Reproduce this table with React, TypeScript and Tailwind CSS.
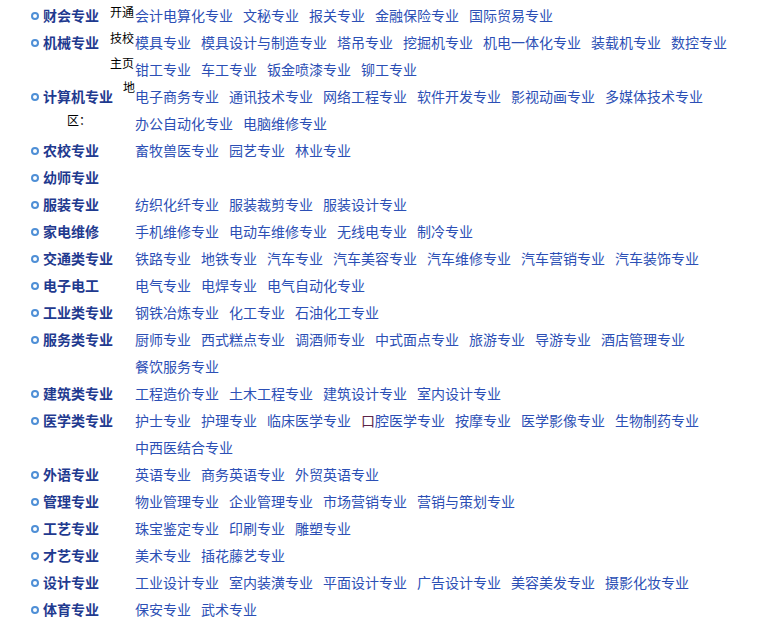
import React from 'react';

interface Category {
  name: string;
  majors: string[];
}

const categories: Category[] = [
  { name: '财会专业', majors: ['会计电算化专业', '文秘专业', '报关专业', '金融保险专业', '国际贸易专业'] },
  { name: '机械专业', majors: ['模具专业', '模具设计与制造专业', '塔吊专业', '挖掘机专业', '机电一体化专业', '装载机专业', '数控专业', '钳工专业', '车工专业', '钣金喷漆专业', '铆工专业'] },
  { name: '计算机专业', majors: ['电子商务专业', '通讯技术专业', '网络工程专业', '软件开发专业', '影视动画专业', '多媒体技术专业', '办公自动化专业', '电脑维修专业'] },
  { name: '农校专业', majors: ['畜牧兽医专业', '园艺专业', '林业专业'] },
  { name: '幼师专业', majors: [] },
  { name: '服装专业', majors: ['纺织化纤专业', '服装裁剪专业', '服装设计专业'] },
  { name: '家电维修', majors: ['手机维修专业', '电动车维修专业', '无线电专业', '制冷专业'] },
  { name: '交通类专业', majors: ['铁路专业', '地铁专业', '汽车专业', '汽车美容专业', '汽车维修专业', '汽车营销专业', '汽车装饰专业'] },
  { name: '电子电工', majors: ['电气专业', '电焊专业', '电气自动化专业'] },
  { name: '工业类专业', majors: ['钢铁冶炼专业', '化工专业', '石油化工专业'] },
  { name: '服务类专业', majors: ['厨师专业', '西式糕点专业', '调酒师专业', '中式面点专业', '旅游专业', '导游专业', '酒店管理专业', '餐饮服务专业'] },
  { name: '建筑类专业', majors: ['工程造价专业', '土木工程专业', '建筑设计专业', '室内设计专业'] },
  { name: '医学类专业', majors: ['护士专业', '护理专业', '临床医学专业', '口腔医学专业', '按摩专业', '医学影像专业', '生物制药专业', '中西医结合专业'] },
  { name: '外语专业', majors: ['英语专业', '商务英语专业', '外贸英语专业'] },
  { name: '管理专业', majors: ['物业管理专业', '企业管理专业', '市场营销专业', '营销与策划专业'] },
  { name: '工艺专业', majors: ['珠宝鉴定专业', '印刷专业', '雕塑专业'] },
  { name: '才艺专业', majors: ['美术专业', '插花藤艺专业'] },
  { name: '设计专业', majors: ['工业设计专业', '室内装潢专业', '平面设计专业', '广告设计专业', '美容美发专业', '摄影化妆专业'] },
  { name: '体育专业', majors: ['保安专业', '武术专业'] },
];

const MajorLink: React.FC<{ text: string }> = ({ text }) => {
  // the 口 in 口腔医学 shows as a visited-looking colour in the original
  if (text === '口腔医学专业') {
    return (
      <a href="#" className="text-[#2c4fb5] no-underline">
        <span className="text-[#5c2448]">口</span>腔医学专业
      </a>
    );
  }
  return (
    <a href="#" className="text-[#2c4fb5] no-underline">
      {text}
    </a>
  );
};

const App: React.FC = () => {
  return (
    <div
      className="relative w-[772px] h-[630px] bg-white pt-[2px] overflow-hidden"
      style={{ fontFamily: '"Noto Sans CJK SC", "Microsoft YaHei", sans-serif' }}
    >
      {categories.map((cat) => (
        <div key={cat.name} className="flex text-[14px] leading-[27px]">
          {/* Category label */}
          <div className="w-[135px] shrink-0 flex items-start pl-[31px] gap-[4px]">
            <span className="mt-[9.5px] w-[8px] h-[8px] rounded-full border-2 border-[#4f8fd6] shrink-0" />
            <span className="font-bold text-[#1f3a8f] whitespace-nowrap">{cat.name}</span>
          </div>

          {/* Majors */}
          <div className="w-[622px] flex flex-wrap gap-x-[10px] min-h-[27px]">
            {cat.majors.map((m) => (
              <MajorLink key={m} text={m} />
            ))}
          </div>
        </div>
      ))}

      {/* Stray overlapping label from the original page */}
      <div className="absolute left-[110px] top-[-1px] w-[24px] text-[12px] leading-[25.5px] text-black pointer-events-none">
        开通技校主页
      </div>
      <span className="absolute left-[123px] top-[80px] text-[12px] leading-[14px] text-black pointer-events-none">地</span>
      <span className="absolute left-[67px] top-[113px] text-[12px] leading-[14px] text-black pointer-events-none">区：</span>
    </div>
  );
};

export default App;
